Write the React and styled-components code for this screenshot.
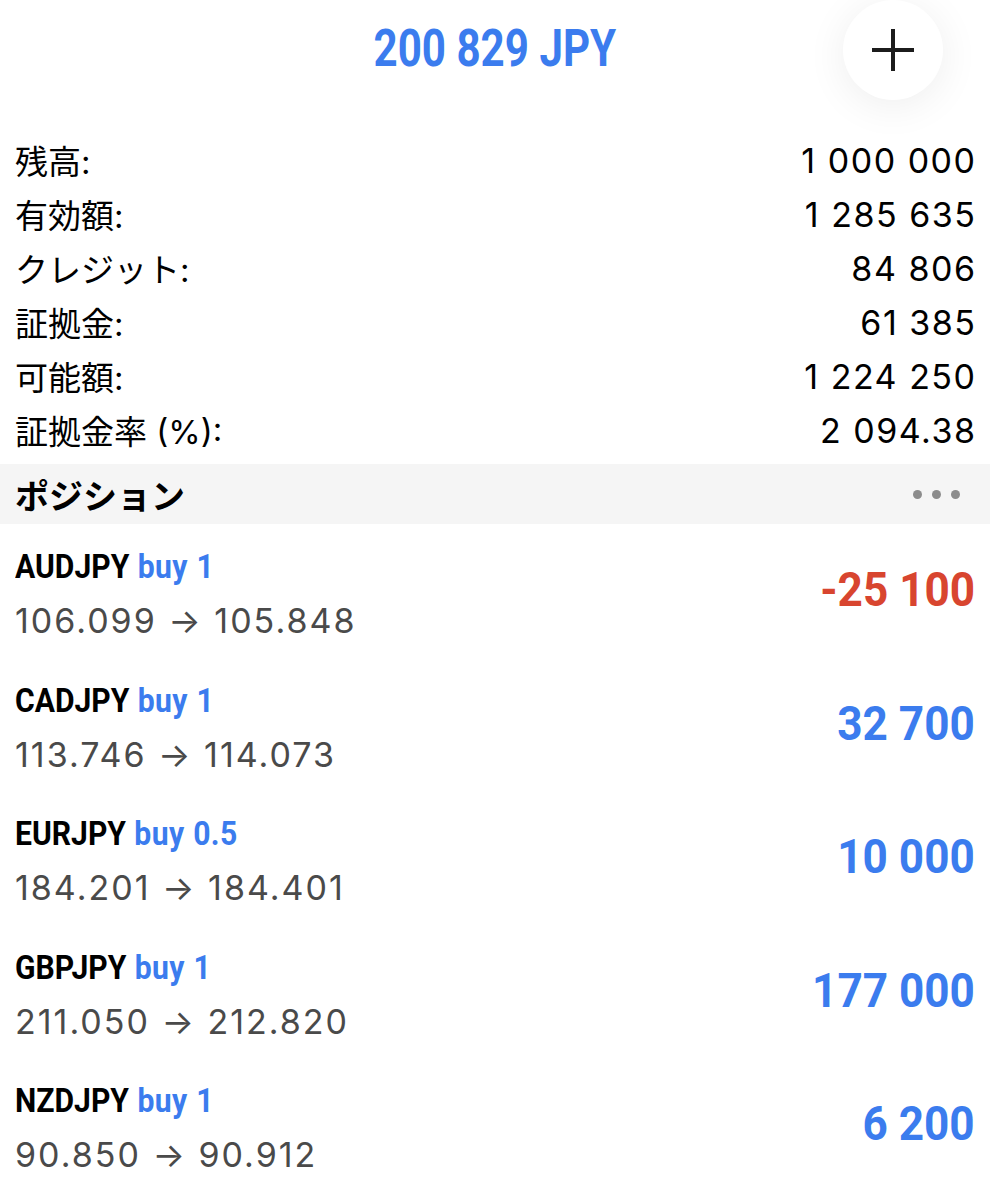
import React from "react";
import styled, { createGlobalStyle } from "styled-components";

const Global = createGlobalStyle`
  html, body {
    margin: 0;
    padding: 0;
    background: #ffffff;
  }
  body {
    font-family: Inter, "Noto Sans CJK JP", sans-serif;
    -webkit-font-smoothing: antialiased;
  }
`;

// narrow bold face: Roboto squeezed horizontally
const Narrow = styled.span`
  display: inline-block;
  white-space: nowrap;
  font-family: Roboto, "Liberation Sans", sans-serif;
  font-weight: 700;
  transform: scaleX(${({ $sx }) => $sx});
  transform-origin: ${({ $origin }) => $origin || "left"} center;
`;

const Page = styled.div`
  width: 990px;
  min-height: 1200px;
  background: #fff;
  color: #000;
`;

const Header = styled.div`
  position: relative;
  height: 100px;
  display: flex;
  align-items: center;
  justify-content: center;
`;

const Title = styled.div`
  font-size: 52px;
  line-height: 60px;
  color: #3b7cee;
  margin-top: -3px;
`;

const AddButton = styled.button`
  position: absolute;
  right: 47px;
  top: 0;
  width: 100px;
  height: 100px;
  border-radius: 50%;
  border: none;
  background: #fff;
  box-shadow: 0 6px 40px rgba(0, 0, 0, 0.07);
  display: flex;
  align-items: center;
  justify-content: center;
  padding: 0;
`;

const Stats = styled.div`
  padding: 33px 15px 7px;
`;

const StatRow = styled.div`
  height: 54px;
  display: flex;
  align-items: center;
  justify-content: space-between;
`;

const StatLabel = styled.span`
  font-family: Inter, "Noto Sans CJK JP", sans-serif;
  font-size: 33px;
  color: #000;
`;

const StatValue = styled.span`
  font-family: Inter, sans-serif;
  font-size: 34px;
  color: #000;
  letter-spacing: 1.5px;
  margin-right: -1.5px;
`;

const SectionBar = styled.div`
  height: 60px;
  background: #f5f5f5;
  display: flex;
  align-items: center;
  justify-content: space-between;
  padding: 0 30px 0 15px;
`;

const SectionTitle = styled.span`
  font-family: "Noto Sans CJK JP", sans-serif;
  font-weight: 700;
  font-size: 34px;
`;

const Dots = styled.div`
  display: flex;
  gap: 10px;
`;

const Dot = styled.span`
  width: 9px;
  height: 9px;
  border-radius: 50%;
  background: #8c8c8c;
`;

const PositionRow = styled.div`
  height: 133.5px;
  box-sizing: border-box;
  padding: 20px 15px 0;
  display: flex;
  justify-content: space-between;
`;

const Info = styled.div`
  display: flex;
  flex-direction: column;
`;

const SymbolLine = styled.div`
  font-size: 34px;
  line-height: 44px;
  color: #000;
  word-spacing: 1px;
`;

const Side = styled.span`
  color: #3b7cee;
  letter-spacing: 0.4px;
`;

const Prices = styled.div`
  margin-top: 11px;
  font-family: Inter, sans-serif;
  font-size: 34px;
  line-height: 44px;
  color: #4a4a4a;
  letter-spacing: 2px;
`;

const Profit = styled.div`
  align-self: center;
  margin-top: -24px;
  font-size: 49px;
  color: ${({ $loss }) => ($loss ? "#d8452f" : "#3b7cee")};
`;

const stats = [
  ["残高:", "1 000 000"],
  ["有効額:", "1 285 635"],
  ["クレジット:", "84 806"],
  ["証拠金:", "61 385"],
  ["可能額:", "1 224 250"],
  ["証拠金率 (%):", "2 094.38"],
];

const positions = [
  { sym: "AUDJPY", side: "buy 1", open: "106.099", cur: "105.848", profit: "-25 100", loss: true },
  { sym: "CADJPY", side: "buy 1", open: "113.746", cur: "114.073", profit: "32 700" },
  { sym: "EURJPY", side: "buy 0.5", open: "184.201", cur: "184.401", profit: "10 000" },
  { sym: "GBPJPY", side: "buy 1", open: "211.050", cur: "212.820", profit: "177 000" },
  { sym: "NZDJPY", side: "buy 1", open: "90.850", cur: "90.912", profit: "6 200" },
];

const PlusIcon = () => (
  <svg width="42" height="42" viewBox="0 0 42 42">
    <path d="M21 0v42M0 21h42" stroke="#1c1c1c" strokeWidth="4" fill="none" />
  </svg>
);

const App = () => {
  return (
    <Page>
      <Global />
      <Header>
        <Title>
          <Narrow $sx={0.81} $origin="center">200 829 JPY</Narrow>
        </Title>
        <AddButton>
          <PlusIcon />
        </AddButton>
      </Header>

      <Stats>
        {stats.map(([label, value]) => (
          <StatRow key={label}>
            <StatLabel>{label}</StatLabel>
            <StatValue>{value}</StatValue>
          </StatRow>
        ))}
      </Stats>

      <SectionBar>
        <SectionTitle>ポジション</SectionTitle>
        <Dots>
          <Dot />
          <Dot />
          <Dot />
        </Dots>
      </SectionBar>

      {positions.map((p) => (
        <PositionRow key={p.sym}>
          <Info>
            <SymbolLine>
              <Narrow $sx={0.886}>
                {p.sym} <Side>{p.side}</Side>
              </Narrow>
            </SymbolLine>
            <Prices>
              {p.open} → {p.cur}
            </Prices>
          </Info>
          <Profit $loss={p.loss}>
            <Narrow $sx={0.9} $origin="right">{p.profit}</Narrow>
          </Profit>
        </PositionRow>
      ))}
    </Page>
  );
};

export default App;
